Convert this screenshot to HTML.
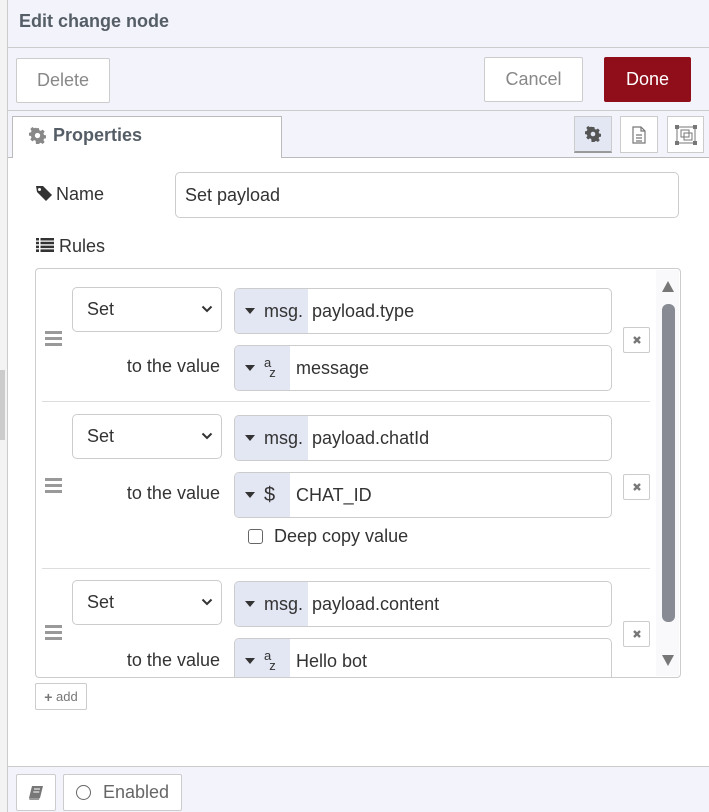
<!DOCTYPE html>
<html><head><meta charset="utf-8"><style>
*{box-sizing:border-box;margin:0;padding:0}
body{width:709px;height:812px;overflow:hidden;background:#f3f3f3;font-family:"Liberation Sans",sans-serif;color:#555;position:relative;font-size:18px}
.a{position:absolute}
.btn{position:absolute;background:#fff;border:1px solid #ccc;border-radius:2px;color:#888;font-size:18px;display:flex;align-items:center;justify-content:center}
.inp{position:absolute;background:#fff;border:1px solid #ccc;border-radius:5px;font-size:18px;color:#333;display:flex;align-items:center;overflow:hidden}
.tb{height:100%;background:#e3e6f3;display:flex;align-items:center;padding-left:10px;color:#333;flex:none}
.tri{width:0;height:0;border-left:5px solid transparent;border-right:5px solid transparent;border-top:6px solid #333;margin-right:9px}
.sel{position:absolute;background:#fff;border:1px solid #ccc;border-radius:5px;font-size:18px;color:#333;padding-left:14px;display:flex;align-items:center}
.sel svg{position:absolute;right:8px;top:17px}
.lbl{position:absolute;font-size:18px;color:#333;text-align:right}
.hd{position:absolute;left:45px;width:17px}
.hd i{display:block;height:3px;background:#999;margin-bottom:3px}
.x{position:absolute;left:623px;width:27px;height:26px;border:1px solid #ccc;border-radius:2px;background:#fff;display:flex;align-items:center;justify-content:center}
.sep{position:absolute;left:42px;width:608px;height:1px;background:#ddd}
</style></head><body>
<div class="a" style="left:0;top:370px;width:5px;height:70px;background:#ccc"></div>
<div class="a" style="left:7px;top:0;width:702px;height:812px;background:#fff;border-left:1px solid #ccc"></div>
<div class="a" style="left:8px;top:0;width:701px;height:157px;background:#f3f3fb"></div>
<div class="a" style="left:19px;top:11px;font-size:18px;font-weight:bold;color:#555e66">Edit change node</div>
<div class="a" style="left:8px;top:47px;width:701px;height:1px;background:#ccc"></div>
<div class="btn" style="left:16px;top:58px;width:94px;height:45px">Delete</div>
<div class="btn" style="left:484px;top:57px;width:99px;height:45px">Cancel</div>
<div class="btn" style="left:604px;top:57px;width:87px;height:45px;background:#8f0e1a;border-color:#8f0e1a;color:#fff">Done</div>
<div class="a" style="left:8px;top:110px;width:701px;height:1px;background:#ccc"></div>
<div class="a" style="left:8px;top:157px;width:701px;height:1px;background:#bbb"></div>
<div class="a" style="left:12px;top:116px;width:270px;height:42px;background:#fff;border:1px solid #bbb;border-bottom:none"></div>
<svg class="a" style="left:29px;top:127px" width="17" height="17" viewBox="0 0 16 16"><path d="M6.5 0h3l.5 2.3 1.6.7 2-1.3 2.1 2.1-1.3 2 .7 1.6 2.3.5v3l-2.3.5-.7 1.6 1.3 2-2.1 2.1-2-1.3-1.6.7-.5 2.3h-3L6 13.7 4.4 13l-2 1.3-2.1-2.1 1.3-2L.9 8.6-1.4 8.1v-3L.9 4.6l.7-1.6-1.3-2L2.4-1.1l2 1.3L6 -.5z" fill="#888" transform="translate(1 1) scale(.875)"/><circle cx="8" cy="8" r="2.5" fill="#fff"/></svg>
<div class="a" style="left:53px;top:125px;font-size:18px;font-weight:bold;color:#555e66">Properties</div>
<div class="a" style="left:574px;top:116px;width:38px;height:37px;background:#e3e6f3;border:1px solid #ccc;border-bottom:2px solid #999;display:flex;align-items:center;justify-content:center"><svg width="16" height="16" viewBox="0 0 16 16"><path d="M6.5 0h3l.5 2.3 1.6.7 2-1.3 2.1 2.1-1.3 2 .7 1.6 2.3.5v3l-2.3.5-.7 1.6 1.3 2-2.1 2.1-2-1.3-1.6.7-.5 2.3h-3L6 13.7 4.4 13l-2 1.3-2.1-2.1 1.3-2L.9 8.6-1.4 8.1v-3L.9 4.6l.7-1.6-1.3-2L2.4-1.1l2 1.3L6 -.5z" fill="#555" transform="translate(1 1) scale(.875)"/><circle cx="8" cy="8" r="2.3" fill="#e3e6f3"/></svg></div>
<div class="a" style="left:620px;top:116px;width:38px;height:37px;background:#fff;border:1px solid #ccc;display:flex;align-items:center;justify-content:center"><svg width="14" height="18" viewBox="0 0 14 18"><path d="M1 1h8l4 4v12H1z M9 1v4h4 M4 9h6M4 12h6M4 15h6" fill="none" stroke="#777" stroke-width="1.2"/></svg></div>
<div class="a" style="left:667px;top:116px;width:37px;height:37px;background:#fff;border:1px solid #ccc;display:flex;align-items:center;justify-content:center"><svg width="22" height="20" viewBox="0 0 22 20"><rect x="2" y="2" width="18" height="16" fill="none" stroke="#777"/><rect x="6" y="5" width="8" height="7" fill="none" stroke="#777"/><rect x="9" y="8" width="8" height="7" fill="none" stroke="#777"/><rect x="0" y="0" width="4" height="4" fill="#777"/><rect x="18" y="0" width="4" height="4" fill="#777"/><rect x="0" y="16" width="4" height="4" fill="#777"/><rect x="18" y="16" width="4" height="4" fill="#777"/></svg></div>

<svg class="a" style="left:35px;top:185px" width="18" height="17" viewBox="0 0 18 17"><path d="M1 1h7l9 9-6 6-9-9z" fill="#333"/><circle cx="4.5" cy="4.5" r="1.5" fill="#fff"/></svg>
<div class="a" style="left:56px;top:184px;font-size:18px;color:#333">Name</div>
<div class="inp" style="left:175px;top:172px;width:504px;height:46px;padding-left:9px">Set payload</div>
<svg class="a" style="left:36px;top:238px" width="18" height="14" viewBox="0 0 18 14"><path d="M0 0h3v2.5H0zM4.5 0H18v2.5H4.5zM0 3.8h3v2.5H0zM4.5 3.8H18v2.5H4.5zM0 7.6h3v2.5H0zM4.5 7.6H18v2.5H4.5zM0 11.4h3V14H0zM4.5 11.4H18V14H4.5z" fill="#333"/></svg>
<div class="a" style="left:59px;top:236px;font-size:18px;color:#333">Rules</div>

<div class="a" style="left:35px;top:268px;width:646px;height:410px;border:1px solid #ccc;border-radius:4px;overflow:hidden;background:#fff"></div>
<div class="a" style="left:656px;top:270px;width:23px;height:406px;background:#f9f9fb"></div>
<div class="a" style="left:662px;top:281px;width:0;height:0;border-left:6px solid transparent;border-right:6px solid transparent;border-bottom:11px solid #777"></div>
<div class="a" style="left:662px;top:304px;width:13px;height:318px;border-radius:6px;background:#888a94"></div>
<div class="a" style="left:662px;top:655px;width:0;height:0;border-left:6px solid transparent;border-right:6px solid transparent;border-top:11px solid #777"></div>

<!-- row1 -->
<div class="sel" style="left:72px;top:287px;width:150px;height:45px">Set<svg width="12" height="8" viewBox="0 0 12 8"><path d="M1.5 1.5l4.5 4.5 4.5-4.5" fill="none" stroke="#333" stroke-width="2"/></svg></div>
<div class="inp" style="left:234px;top:288px;width:378px;height:46px"><div class="tb" style="width:73px"><div class="tri"></div>msg.</div><span style="margin-left:4px">payload.type</span></div>
<div class="hd" style="top:331px"><i></i><i></i><i></i></div>
<div class="lbl" style="left:100px;top:356px;width:120px">to the value</div>
<div class="inp" style="left:234px;top:345px;width:378px;height:46px"><div class="tb" style="width:55px"><div class="tri"></div><span style="font-size:13px;line-height:1;position:relative"><span style="position:relative;top:-6px">a</span><span style="position:relative;top:4px;left:-2px">z</span></span></div><span style="margin-left:6px">message</span></div>
<div class="x" style="top:327px"><svg width="10" height="10" viewBox="0 0 10 10"><path d="M2 2l6 6M8 2l-6 6" stroke="#777" stroke-width="2.4"/></svg></div>
<div class="sep" style="top:401px"></div>
<!-- row2 -->
<div class="sel" style="left:72px;top:414px;width:150px;height:45px">Set<svg width="12" height="8" viewBox="0 0 12 8"><path d="M1.5 1.5l4.5 4.5 4.5-4.5" fill="none" stroke="#333" stroke-width="2"/></svg></div>
<div class="inp" style="left:234px;top:415px;width:378px;height:46px"><div class="tb" style="width:73px"><div class="tri"></div>msg.</div><span style="margin-left:4px">payload.chatId</span></div>
<div class="hd" style="top:478px"><i></i><i></i><i></i></div>
<div class="lbl" style="left:100px;top:483px;width:120px">to the value</div>
<div class="inp" style="left:234px;top:472px;width:378px;height:46px"><div class="tb" style="width:55px"><div class="tri"></div><span style="font-size:20px">$</span></div><span style="margin-left:6px">CHAT_ID</span></div>
<div class="x" style="top:474px"><svg width="10" height="10" viewBox="0 0 10 10"><path d="M2 2l6 6M8 2l-6 6" stroke="#777" stroke-width="2.4"/></svg></div>
<div class="a" style="left:248px;top:529px;width:15px;height:15px;border:1px solid #666;border-radius:3px;background:#fff"></div>
<div class="a" style="left:274px;top:526px;font-size:18px;color:#333">Deep copy value</div>
<div class="sep" style="top:568px"></div>
<!-- row3 -->
<div class="sel" style="left:72px;top:580px;width:150px;height:45px">Set<svg width="12" height="8" viewBox="0 0 12 8"><path d="M1.5 1.5l4.5 4.5 4.5-4.5" fill="none" stroke="#333" stroke-width="2"/></svg></div>
<div class="inp" style="left:234px;top:581px;width:378px;height:46px"><div class="tb" style="width:73px"><div class="tri"></div>msg.</div><span style="margin-left:4px">payload.content</span></div>
<div class="hd" style="top:625px"><i></i><i></i><i></i></div>
<div class="lbl" style="left:100px;top:650px;width:120px">to the value</div>
<div class="a" style="left:234px;top:638px;width:378px;height:39px;overflow:hidden"><div class="inp" style="left:0;top:0;width:378px;height:46px"><div class="tb" style="width:55px"><div class="tri"></div><span style="font-size:13px;line-height:1;position:relative"><span style="position:relative;top:-6px">a</span><span style="position:relative;top:4px;left:-2px">z</span></span></div><span style="margin-left:6px">Hello bot</span></div></div>
<div class="x" style="top:621px"><svg width="10" height="10" viewBox="0 0 10 10"><path d="M2 2l6 6M8 2l-6 6" stroke="#777" stroke-width="2.4"/></svg></div>

<div class="btn" style="left:35px;top:683px;width:52px;height:27px;font-size:13px;color:#777"><b style="font-size:14px">+</b>&nbsp;add</div>

<div class="a" style="left:8px;top:766px;width:701px;height:46px;background:#f3f3fb;border-top:1px solid #ccc"></div>
<div class="btn" style="left:16px;top:774px;width:40px;height:37px"><svg width="16" height="16" viewBox="0 0 16 16"><path d="M4 1h11l-3 12H1z" fill="#777"/><path d="M1 13h10.5l-.5 2H1.5z" fill="#999"/><path d="M6 4h6M5.3 7h6" stroke="#fff" stroke-width="1"/></svg></div>
<div class="btn" style="left:63px;top:774px;width:119px;height:37px;color:#666"><span style="display:inline-block;width:15px;height:15px;border:1.5px solid #666;border-radius:50%;margin-right:12px"></span>Enabled</div>
</body></html>
